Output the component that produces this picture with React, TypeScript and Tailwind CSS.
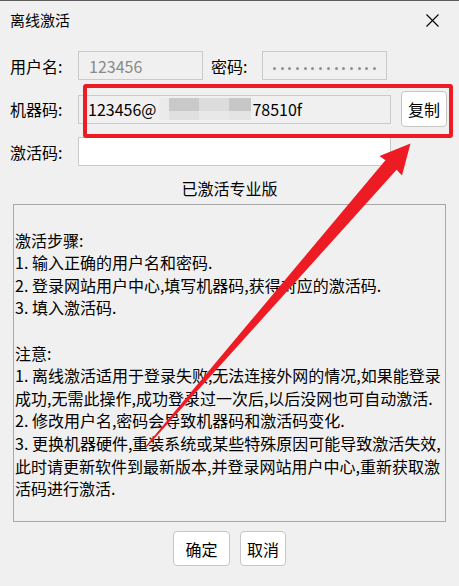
import React from "react";

const font = "font-['Noto_Sans_CJK_SC',sans-serif]";

const helpLines = [
  "",
  "激活步骤:",
  "1. 输入正确的用户名和密码.",
  "2. 登录网站用户中心,填写机器码,获得对应的激活码.",
  "3. 填入激活码.",
  "",
  "注意:",
  "1. 离线激活适用于登录失败,无法连接外网的情况,如果能登录",
  "成功,无需此操作,成功登录过一次后,以后没网也可自动激活.",
  "2. 修改用户名,密码会导致机器码和激活码变化.",
  "3. 更换机器硬件,重装系统或某些特殊原因可能导致激活失效,",
  "此时请更新软件到最新版本,并登录网站用户中心,重新获取激",
  "活码进行激活.",
];

const Label = ({ children }: { children: React.ReactNode }) => (
  <div className="w-[68px] shrink-0 text-[16px] leading-none text-black">{children}</div>
);

// mosaic over the hidden part of the machine code
const Mosaic = () => (
  <span className="inline-grid grid-cols-[10px_30px_30px_22px] grid-rows-[13px_9px] ml-[3px] mr-[1px] align-middle">
    <span className="bg-[#ebebeb] row-span-2" />
    <span className="bg-[#c9c9c9]" />
    <span className="bg-[#dcdcdc]" />
    <span className="bg-[#c7c7c7]" />
    <span className="bg-[#e0e0e0]" />
    <span className="bg-[#e8e8e8]" />
    <span className="bg-[#e4e4e4]" />
  </span>
);

const App = () => {
  return (
    <div className={`relative w-[459px] h-[586px] overflow-hidden bg-[#f0f0f0] border-t border-[#5c5c5c] ${font}`}>
      <div className="h-[39px] flex items-center justify-between pl-[10px] pr-[20px]">
        <span className="text-[15px] text-black">离线激活</span>
        <svg width="13" height="13" viewBox="0 0 13 13" className="text-black">
          <path d="M0.5 0.5 L12.5 12.5 M12.5 0.5 L0.5 12.5" stroke="currentColor" strokeWidth="1.1" />
        </svg>
      </div>

      <div className="mt-[11px] flex items-center h-[29px] pl-[10px]">
        <Label>用户名:</Label>
        <div className="w-[125px] h-[29px] border border-[#cacaca] flex items-center pl-[10px] text-[16px] text-[#8a8a8a]">
          123456
        </div>
        <div className="w-[59px] pl-[8px] text-[16px] text-black">密码:</div>
        <div className="w-[125px] h-[29px] border border-[#cacaca] flex items-center pl-[10px] pt-[5px] gap-[4.7px]">
          {Array.from({ length: 14 }).map((_, i) => (
            <span key={i} className="w-[3px] h-[3px] rounded-full bg-[#8f8f8f]" />
          ))}
        </div>
      </div>

      <div className="mt-[11px] flex items-center h-[36px] pl-[10px]">
        <Label>机器码:</Label>
        <div className="w-[313px] h-[29px] border border-[#cacaca] flex items-center pl-[9px] text-[16px] text-black whitespace-nowrap">
          123456@
          <Mosaic />
          78510f
        </div>
        <button className="ml-[10px] w-[46px] h-[36px] bg-white border border-[#c6c6c6] rounded-[4px] text-[16px] text-black">
          复制
        </button>
      </div>

      <div className="mt-[10px] flex items-center h-[29px] pl-[10px]">
        <Label>激活码:</Label>
        <div className="w-[313px] h-[29px] border border-[#cacaca] bg-white" />
      </div>

      <div className="mt-[10px] h-[23px] flex items-center justify-center text-[16px] text-black">已激活专业版</div>

      <div className="mt-[5px] ml-[13px] w-[433px] h-[318px] border border-[#a8a8a8] pt-[1px] pl-[1px] text-[16px] leading-[22.6px] text-black">
        {helpLines.map((line, i) => (
          <div key={i} className="h-[22.6px] whitespace-nowrap">
            {line}
          </div>
        ))}
      </div>

      <div className="mt-[9px] flex justify-center gap-[10px]">
        <button className="w-[57px] h-[35px] bg-white border border-[#c6c6c6] rounded-[4px] text-[16px] text-black">确定</button>
        <button className="w-[46px] h-[35px] bg-white border border-[#c6c6c6] rounded-[4px] text-[16px] text-black">取消</button>
      </div>

      {/* annotation drawn on top of the dialog */}
      <svg className="absolute inset-0 pointer-events-none" width="459" height="586" viewBox="0 0 459 586">
        <rect x="85" y="85" width="366" height="50" rx="1" fill="none" stroke="#ed1c24" strokeWidth="4" />
        <polygon
          fill="#ed1c24"
          points="145.4,447.5 396.6,168.8 402,174.5 410.5,142.5 379.5,155 385.4,159.2 144.4,446.7"
        />
      </svg>
    </div>
  );
};

export default App;
